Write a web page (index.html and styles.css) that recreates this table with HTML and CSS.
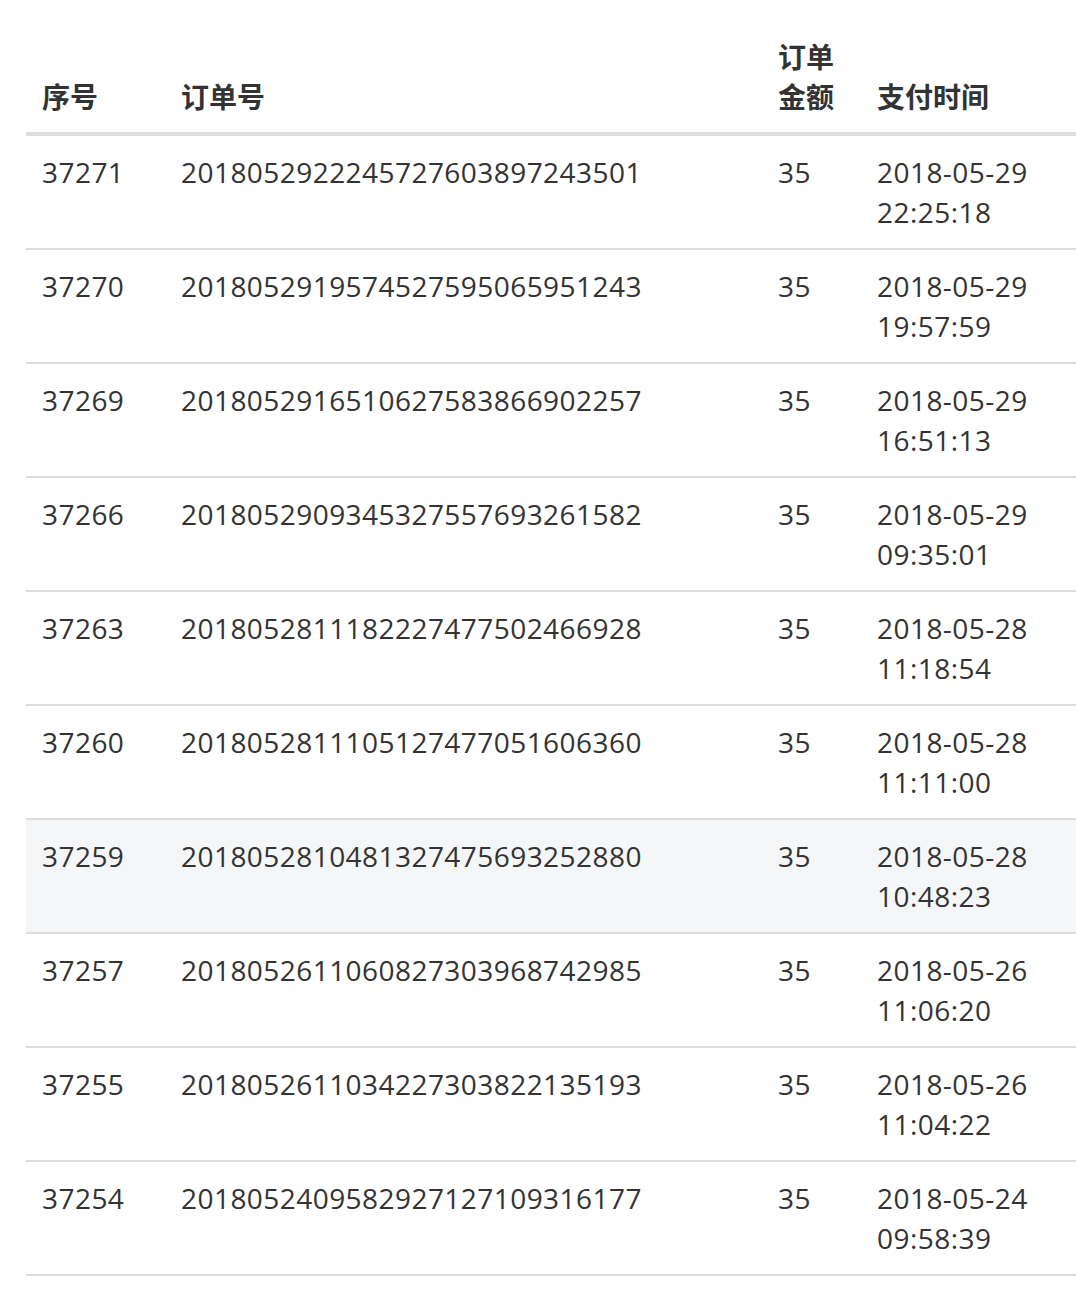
FILE: index.html
```html
<!DOCTYPE html>
<html lang="zh-CN">
<head>
<meta charset="utf-8">
<link rel="stylesheet" href="styles.css">
</head>
<body>
<div class="wrap">
<table class="orders">
  <thead>
    <tr>
      <th class="c-id">序号</th>
      <th class="c-no">订单号</th>
      <th class="c-amt">订单金额</th>
      <th class="c-time">支付时间</th>
    </tr>
  </thead>
  <tbody>
    <tr><td>37271</td><td>2018052922245727603897243501</td><td>35</td><td>2018-05-29 22:25:18</td></tr>
    <tr><td>37270</td><td>2018052919574527595065951243</td><td>35</td><td>2018-05-29 19:57:59</td></tr>
    <tr><td>37269</td><td>2018052916510627583866902257</td><td>35</td><td>2018-05-29 16:51:13</td></tr>
    <tr><td>37266</td><td>2018052909345327557693261582</td><td>35</td><td>2018-05-29 09:35:01</td></tr>
    <tr><td>37263</td><td>2018052811182227477502466928</td><td>35</td><td>2018-05-28 11:18:54</td></tr>
    <tr><td>37260</td><td>2018052811105127477051606360</td><td>35</td><td>2018-05-28 11:11:00</td></tr>
    <tr class="hover"><td>37259</td><td>2018052810481327475693252880</td><td>35</td><td>2018-05-28 10:48:23</td></tr>
    <tr><td>37257</td><td>2018052611060827303968742985</td><td>35</td><td>2018-05-26 11:06:20</td></tr>
    <tr><td>37255</td><td>2018052611034227303822135193</td><td>35</td><td>2018-05-26 11:04:22</td></tr>
    <tr><td>37254</td><td>2018052409582927127109316177</td><td>35</td><td>2018-05-24 09:58:39</td></tr>
  </tbody>
</table>
</div>
</body>
</html>
```

FILE: styles.css
```css
html, body {
  margin: 0;
  padding: 0;
  background: #fff;
}
body {
  font-family: "Open Sans", "Noto Sans CJK SC", sans-serif;
  font-size: 28px;
  line-height: 40px;
  color: #333;
  overflow: hidden;
}
.wrap {
  padding: 20px 0 0 26px;
}
.orders {
  border-collapse: collapse;
  table-layout: fixed;
  width: 1050px;
}
.orders th,
.orders td {
  padding: 16px;
  text-align: left;
  vertical-align: top;
}
.orders th {
  font-family: "Noto Sans CJK SC", sans-serif;
  font-weight: 700;
  vertical-align: bottom;
  border-bottom: 4px solid #ddd;
}
.orders td {
  border-top: 2px solid #ddd;
  letter-spacing: 0.45px;
}
.orders tbody tr:last-child td {
  border-bottom: 2px solid #ddd;
}
.orders tr.hover td {
  background: #f5f6f7;
}
.c-id { width: 107px; }
.c-no { width: 565px; }
.c-amt { width: 67px; }
.c-time { width: 183px; }
```
